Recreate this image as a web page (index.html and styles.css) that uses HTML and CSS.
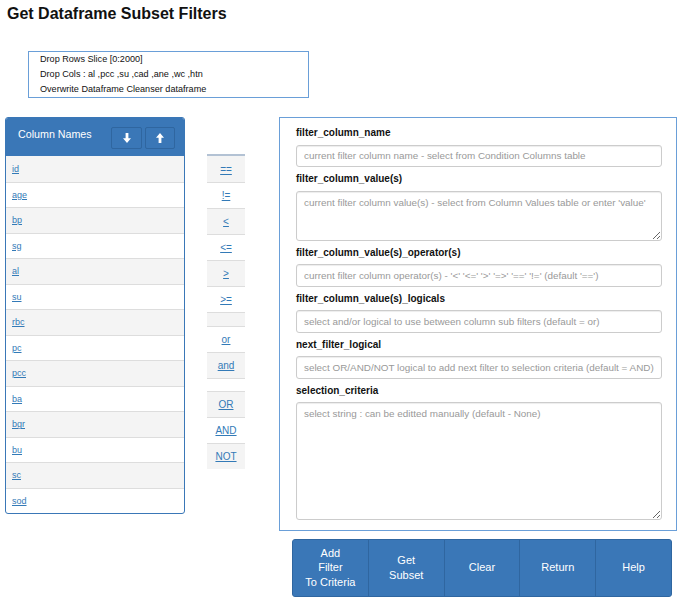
FILE: index.html
```html
<!DOCTYPE html>
<html>
<head>
<meta charset="utf-8">
<link rel="stylesheet" href="styles.css">
</head>
<body>
<h1 class="title">Get Dataframe Subset Filters</h1>
<div class="info">
  <div class="info-line">Drop Rows Slice [0:2000]</div>
  <div class="info-line">Drop Cols : al ,pcc ,su ,cad ,ane ,wc ,htn</div>
  <div class="info-line">Overwrite Dataframe Cleanser dataframe</div>
</div>
<div class="main">
  <div class="colpanel">
    <div class="colhead">
      <span class="colhead-title">Column Names</span>
      <div class="hbtns">
        <button class="hbtn hbtn-down"><svg width="8" height="10" viewBox="0 0 8 10"><path d="M2.6 0h2.8v5.2H8L4 10 0 5.2h2.6z" fill="#fff"/></svg></button>
        <button class="hbtn hbtn-up"><svg width="8" height="10" viewBox="0 0 8 10"><path d="M2.6 10h2.8V4.8H8L4 0 0 4.8h2.6z" fill="#fff"/></svg></button>
      </div>
    </div>
    <ul class="collist">
      <li class="colrow"><a class="link">id</a></li>
      <li class="colrow"><a class="link">age</a></li>
      <li class="colrow"><a class="link">bp</a></li>
      <li class="colrow"><a class="link">sg</a></li>
      <li class="colrow"><a class="link">al</a></li>
      <li class="colrow"><a class="link">su</a></li>
      <li class="colrow"><a class="link">rbc</a></li>
      <li class="colrow"><a class="link">pc</a></li>
      <li class="colrow"><a class="link">pcc</a></li>
      <li class="colrow"><a class="link">ba</a></li>
      <li class="colrow"><a class="link">bgr</a></li>
      <li class="colrow"><a class="link">bu</a></li>
      <li class="colrow"><a class="link">sc</a></li>
      <li class="colrow"><a class="link">sod</a></li>
    </ul>
  </div>
  <div class="ops">
    <div class="op"><a class="link">==</a></div>
    <div class="op"><a class="link">!=</a></div>
    <div class="op"><a class="link">&lt;</a></div>
    <div class="op"><a class="link">&lt;=</a></div>
    <div class="op"><a class="link">&gt;</a></div>
    <div class="op"><a class="link">&gt;=</a></div>
    <div class="op op-short"></div>
    <div class="op"><a class="link">or</a></div>
    <div class="op"><a class="link">and</a></div>
    <div class="op op-short"></div>
    <div class="op"><a class="link">OR</a></div>
    <div class="op"><a class="link">AND</a></div>
    <div class="op"><a class="link">NOT</a></div>
  </div>
  <div class="form">
    <div class="label label-first">filter_column_name</div>
    <input class="field" placeholder="current filter column name - select from Condition Columns table">
    <div class="label">filter_column_value(s)</div>
    <textarea class="field area-small" placeholder="current filter column value(s) - select from Column Values table or enter 'value'"></textarea>
    <div class="label">filter_column_value(s)_operator(s)</div>
    <input class="field" placeholder="current filter column operator(s) - '<' '<=' '>' '=>' '==' '!=' (default '==')">
    <div class="label">filter_column_value(s)_logicals</div>
    <input class="field" placeholder="select and/or logical to use between column sub filters (default = or)">
    <div class="label">next_filter_logical</div>
    <input class="field" placeholder="select OR/AND/NOT logical to add next filter to selection criteria (default = AND)">
    <div class="label">selection_criteria</div>
    <textarea class="field area-large" placeholder="select string : can be editted manually (default - None)"></textarea>
  </div>
</div>
<div class="actions">
  <button class="abtn">Add<br>Filter<br>To Criteria</button>
  <button class="abtn">Get<br>Subset</button>
  <button class="abtn">Clear</button>
  <button class="abtn">Return</button>
  <button class="abtn">Help</button>
</div>
</body>
</html>
```
FILE: styles.css
```css
* { box-sizing: border-box; }
body {
  margin: 0;
  font-family: "Liberation Sans", Arial, sans-serif;
  color: #222;
  background: #fff;
}
.title {
  margin: 0;
  padding: 4px 7px 0;
  font-size: 16px;
  line-height: 19px;
  font-weight: bold;
  color: #111;
}
.info {
  margin: 28px 0 0 28px;
  width: 281px;
  height: 47px;
  border: 1px solid #6a9fd8;
  padding-left: 11px;
  font-size: 9.1px;
  color: #111;
}
.info-line { line-height: 15px; }
.main {
  display: flex;
  align-items: flex-start;
  margin-top: 19px;
}
.colpanel {
  margin-left: 5px;
  width: 180px;
  border: 1px solid #3a77b7;
  border-radius: 3px;
  overflow: hidden;
  background: #fff;
}
.colhead {
  height: 38px;
  background: #3a77b7;
  display: flex;
  justify-content: space-between;
  align-items: flex-start;
  padding: 8px 9px 0 12px;
}
.colhead-title {
  color: #fff;
  font-size: 10.7px;
  line-height: 16px;
}
.hbtns {
  display: flex;
  gap: 3px;
  margin-top: 1px;
}
.hbtn {
  height: 22px;
  width: 30px;
  background: #3a77b7;
  border: 1px solid #2f66a0;
  border-radius: 2px;
  padding: 0;
  display: flex;
  align-items: center;
  justify-content: center;
}
.hbtn-down { width: 31px; }
.collist {
  list-style: none;
  margin: 0;
  padding: 0;
}
.colrow {
  height: 25.5px;
  border-top: 1px solid #ddd;
  display: flex;
  align-items: center;
  padding-left: 6px;
  font-size: 9px;
}
.colrow:nth-child(odd) { background: #f4f4f4; }
.colrow:first-child { border-top: none; }
.link {
  color: #337ab7;
  text-decoration: underline;
}
.ops {
  margin-left: 22px;
  margin-top: 37px;
  width: 38px;
  border-top: 2px solid #b3c2d4;
}
.op {
  height: 26px;
  border-top: 1px solid #ddd;
  display: flex;
  align-items: center;
  justify-content: center;
  font-size: 10px;
}
.op:first-child { border-top: none; }
.op:nth-child(odd) { background: #f4f4f4; }
.op-short { height: 13.5px; }
.form {
  margin-left: 34px;
  width: 398px;
  border: 1px solid #6a9fd8;
  padding: 8px 14px 10px 16px;
  display: flex;
  flex-direction: column;
}
.label {
  font-size: 10px;
  font-weight: bold;
  line-height: 13px;
  margin: 5px 0 5.5px;
  color: #111;
}
.label-first { margin-top: 0; }
.field {
  display: block;
  width: 366px;
  height: 22.5px;
  border: 1px solid #ccc;
  border-radius: 3px;
  box-shadow: inset 0 1px 1px rgba(0,0,0,.075);
  padding: 0 2px 0 7px;
  font-family: "Liberation Sans", Arial, sans-serif;
  font-size: 9.9px;
  color: #555;
  background: #fff;
  margin: 0;
}
.field::placeholder { color: #999; }
textarea.field {
  padding: 5px 2px 5px 7px;
  resize: both;
}
.area-small { height: 50px; }
.area-large { height: 117.5px; }
.actions {
  margin: 8px 0 0 292px;
  width: 380px;
  height: 58px;
  display: flex;
  background: #3a77b7;
  border: 1px solid #2f66a0;
  border-radius: 3px;
  overflow: hidden;
}
.abtn {
  flex: 1;
  background: #3a77b7;
  color: #fff;
  border: none;
  border-left: 1px solid #2f66a0;
  font-family: "Liberation Sans", Arial, sans-serif;
  font-size: 11px;
  line-height: 14.5px;
  padding: 0;
  margin: 0;
}
.abtn:first-child { border-left: none; }
```
